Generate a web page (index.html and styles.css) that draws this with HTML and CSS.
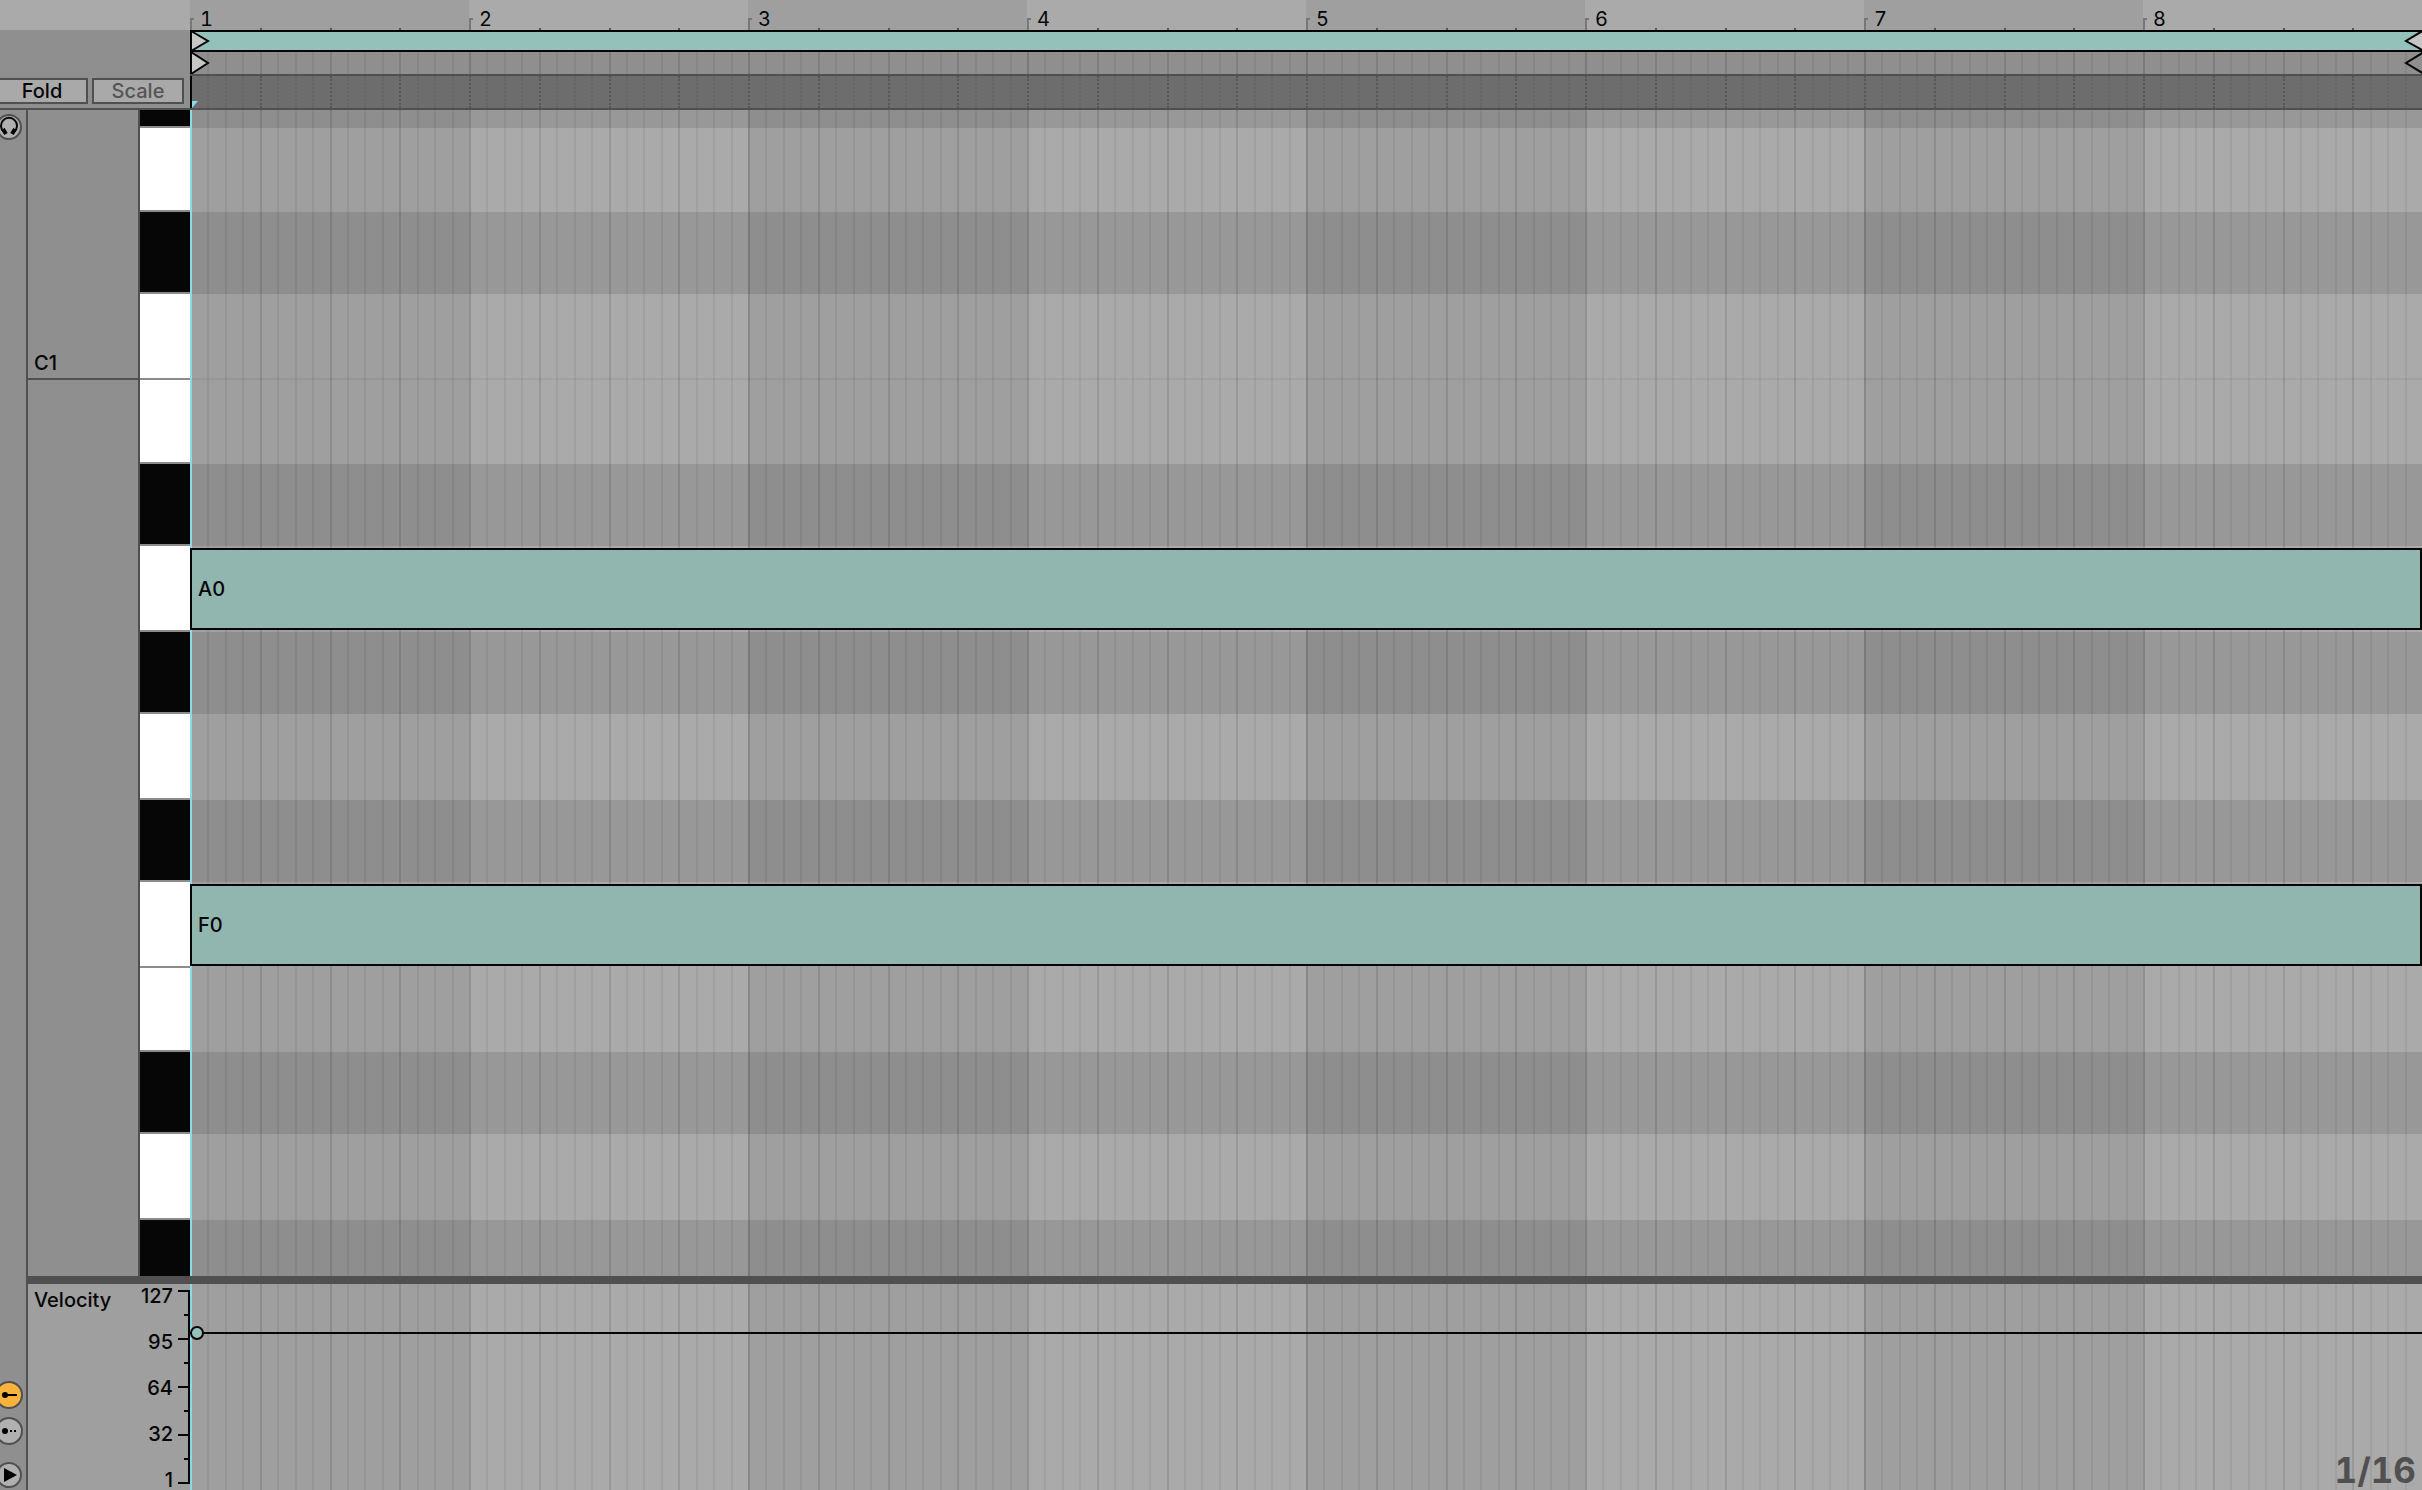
FILE: index.html
```
<!DOCTYPE html>
<html lang="en">

<head>
    <meta charset="UTF-8">
    <meta name="viewport" content="width=device-width, initial-scale=1.0">
    <title>MIDI Note Editor</title>
    <link rel="stylesheet" href="styles.css">
</head>

<body>
    <header class="header">
        <div class="header-left">
            <div class="header-blank"></div>
            <div class="modes">
                <button type="button" class="mode fold">Fold</button>
                <button type="button" class="mode scale">Scale</button>
            </div>
        </div>
        <div class="timeline">
            <div class="ruler bars" data-numbers="true"></div>
            <div class="loop">
                <svg class="marker" viewBox="0 0 20 22"><path d="M1 1 L18 11 L1 21 Z" /></svg>
                <svg class="marker" viewBox="0 0 20 22"><path d="M22 0 L4 11 L22 21" /></svg>
            </div>
            <div class="strip">
                <div class="bars plain"></div>
                <div class="markers">
                    <svg class="marker" viewBox="0 0 20 22"><path d="M1 0 L18 11 L1 22 Z" /></svg>
                    <svg class="marker end" viewBox="0 0 20 22"><path d="M22 0 L4 11 L22 22" /></svg>
                </div>
            </div>
            <div class="scrub">
                <div class="bars plain faint"></div>
                <svg class="playhead" viewBox="0 0 6 7"><path d="M0 0 H6 L0 7 Z" /></svg>
            </div>
        </div>
    </header>

    <main class="main">
        <aside class="rail">
            <button type="button" class="round" aria-label="Preview">
                <svg viewBox="0 0 28 28">
                    <circle class="ring" cx="14" cy="14" r="12" />
                    <path class="phones" d="M9 19 A8 8 0 1 1 19 19" />
                    <path class="cups" d="M8 16 L11 21 M20 16 L17 21" />
                </svg>
            </button>
            <button type="button" class="round push" aria-label="Show velocity">
                <svg viewBox="0 0 28 28">
                    <circle class="ring on" cx="14" cy="14" r="13" />
                    <circle cx="10" cy="14" r="3" />
                    <path d="M10 13 H22 V15 H10 Z" />
                </svg>
            </button>
            <button type="button" class="round chance" aria-label="Show chance">
                <svg viewBox="0 0 28 28">
                    <circle class="ring" cx="14" cy="14" r="13" />
                    <circle cx="10" cy="14" r="3" />
                    <path d="M15 13 H17 V15 H15 Z M19 13 H21 V15 H19 Z" />
                </svg>
            </button>
            <button type="button" class="round play" aria-label="Show lanes">
                <svg viewBox="0 0 28 28">
                    <circle class="ring" cx="14" cy="14" r="12" />
                    <path d="M9 7 L22 14 L9 21 Z" />
                </svg>
            </button>
        </aside>

        <div class="editor">
            <section class="roll">
                <div class="octaves">
                    <div class="octave">C1</div>
                </div>
                <div class="keys" id="keys"></div>
                <div class="stack">
                    <div class="bars"></div>
                    <div class="lanes" id="lanes"></div>
                </div>
            </section>

            <section class="velocity">
                <div class="velocity-title">Velocity</div>
                <div class="labels">
                    <span>127</span>
                    <span>95</span>
                    <span>64</span>
                    <span>32</span>
                    <span>1</span>
                </div>
                <div class="ticks">
                    <i></i><i></i><i></i><i></i><i></i><i></i><i></i><i></i><i></i>
                </div>
                <div class="stack">
                    <div class="bars"></div>
                    <div class="stem"></div>
                    <div class="grid-size">1/16</div>
                </div>
            </section>
        </div>
    </main>

    <script>
        // visible pitches from top to bottom, "note" marks the ones that are played
        const pitches = [
            { name: 'D#1', type: 'black' },
            { name: 'D1', type: 'white short' },
            { name: 'C#1', type: 'black' },
            { name: 'C1', type: 'white split' },
            { name: 'B0', type: 'white short' },
            { name: 'A#0', type: 'black' },
            { name: 'A0', type: 'white', note: true },
            { name: 'G#0', type: 'black' },
            { name: 'G0', type: 'white' },
            { name: 'F#0', type: 'black' },
            { name: 'F0', type: 'white', note: true },
            { name: 'E0', type: 'white short' },
            { name: 'D#0', type: 'black' },
            { name: 'D0', type: 'white' },
            { name: 'C#0', type: 'black' }
        ];

        const keys = document.getElementById('keys');
        const lanes = document.getElementById('lanes');

        pitches.forEach(function (pitch) {
            const key = document.createElement('div');
            key.className = 'key ' + pitch.type;
            keys.appendChild(key);

            const lane = document.createElement('div');
            lane.className = 'lane ' + pitch.type;
            if (pitch.note) {
                lane.innerHTML = `<div class="note">${pitch.name}</div>`;
            }
            lanes.appendChild(lane);
        });

        // 8 bars, each with 16 steps
        document.querySelectorAll('.bars').forEach(function (bars) {
            for (let i = 1; i <= 8; i++) {
                const bar = document.createElement('div');
                bar.className = 'bar';
                if (bars.dataset.numbers) {
                    bar.innerHTML = `<span class="number">${i}</span><b></b><b></b><b></b>`;
                } else {
                    bar.innerHTML = '<i></i>'.repeat(16);
                }
                bars.appendChild(bar);
            }
        });
    </script>
</body>

</html>
```
FILE: styles.css
```
*,
*::before {
    box-sizing: border-box;
}

body {
    display: flex;
    flex-direction: column;
    height: 100vh;
    margin: 0;
    overflow: hidden;
    background-color: #8f8f8f;
    color: #060606;
    font-family: Inter, "Liberation Sans", sans-serif;
    font-size: 20px;
    font-weight: 500;
    line-height: 20px;
}

svg {
    display: block;
}

button {
    padding: 0;
    font: inherit;
}

/* header */
.header {
    display: grid;
    grid-template-columns: 190px 1fr;
    height: 110px;
    border-bottom: 2px solid #505050;
}

.header-left {
    display: flex;
    flex-direction: column;
    justify-content: space-between;
}

.header-blank {
    height: 30px;
    background-color: #aaaaaa;
}

.modes {
    display: flex;
    gap: 4px;
    margin-left: -4px;
    padding-bottom: 4px;
}

.mode {
    width: 92px;
    height: 26px;
    border: 2px solid #505050;
    background-color: #a9a9a9;
    color: #060606;
    line-height: 22px;
}

.scale {
    color: #555555;
}

.timeline {
    display: flex;
    flex-direction: column;
    min-width: 0;
}

/* bars and steps */
.bars {
    display: grid;
    grid-template-columns: repeat(8, 1fr);
    min-width: 0;
}

.bar {
    display: grid;
    grid-template-columns: repeat(16, 1fr);
    background-color: #9f9f9f;
}

.bar:nth-child(even) {
    background-color: #aaaaaa;
}

.bar i {
    border-left: 2px solid rgba(0, 0, 0, 0.06);
}

.bar i:nth-child(4n+1) {
    border-color: rgba(0, 0, 0, 0.11);
}

.bar i:first-child {
    border-color: rgba(0, 0, 0, 0.15);
}

.plain .bar,
.plain .bar:nth-child(even) {
    background-color: transparent;
}

.faint .bar i {
    border-left-style: dotted;
    border-color: rgba(0, 0, 0, 0.06);
}

.faint .bar i:nth-child(4n+1) {
    border-color: rgba(0, 0, 0, 0.2);
}

.ruler {
    height: 30px;
}

.ruler .bar {
    grid-template-columns: repeat(4, 1fr);
    align-items: end;
}

.number {
    height: 12px;
    padding-left: 8px;
    border-left: 2px solid #777777;
    background: linear-gradient(#777777, #777777) no-repeat 0 0 / 2px 2px;
    font-weight: 400;
    font-variant-numeric: tabular-nums;
    line-height: 3px;
}

.ruler b {
    width: 2px;
    height: 2px;
    background-color: #555555;
}

.loop {
    display: flex;
    justify-content: space-between;
    height: 22px;
    border: solid #060606;
    border-width: 2px 0 2px 2px;
    background-color: #94c1ba;
}

.marker {
    flex: none;
    width: 20px;
    height: 22px;
    fill: #c6c6c6;
    stroke: #060606;
    stroke-width: 2;
}

.loop .marker {
    margin: -2px 0 0 -2px;
}

.strip,
.scrub,
.stack {
    display: grid;
    grid-template-columns: minmax(0, 1fr);
    grid-template-rows: minmax(0, 1fr);
}

.strip > *,
.scrub > *,
.stack > * {
    grid-area: 1 / 1;
}

.strip {
    height: 24px;
    border-bottom: 2px solid #505050;
}

.markers {
    display: flex;
    justify-content: space-between;
    border-left: 2px solid #060606;
}

.markers .marker {
    margin-left: -2px;
}

.marker.end {
    fill: none;
}

.scrub {
    height: 32px;
    background-color: #6d6d6d;
}

.playhead {
    align-self: end;
    box-sizing: content-box;
    width: 6px;
    height: 7px;
    padding-top: 25px;
    border-left: 2px solid #060606;
    fill: #8adbe8;
}

/* left rail */
.main {
    display: flex;
    flex: 1;
    min-height: 0;
}

.rail {
    display: flex;
    flex-direction: column;
    width: 28px;
    padding: 3px 0 1px;
    border-right: 2px solid #505050;
    overflow: hidden;
}

.round {
    width: 28px;
    height: 28px;
    margin-left: -5px;
    border: 0;
    background: none;
}

.ring {
    fill: #b0b0b0;
    stroke: #505050;
    stroke-width: 2;
}

.ring.on {
    fill: #f9b23c;
}

.phones,
.cups {
    fill: none;
    stroke: #060606;
    stroke-width: 2;
}

.cups {
    stroke-width: 4;
}

.push {
    margin-top: auto;
}

.chance {
    margin-top: 8px;
}

.play {
    margin-top: 16px;
}

/* piano roll */
.editor {
    display: flex;
    flex: 1;
    flex-direction: column;
    min-width: 0;
}

.roll {
    display: grid;
    flex: 1;
    grid-template-columns: 112px 50px minmax(0, 1fr);
    grid-template-rows: minmax(0, 1fr);
    min-height: 0;
    overflow: hidden;
    border-bottom: 8px solid #505050;
}

.octaves {
    border-right: 2px solid #505050;
}

.octave {
    display: flex;
    align-items: flex-end;
    height: 270px;
    padding: 0 6px;
    border-bottom: 2px solid #505050;
    line-height: 30px;
}

.keys {
    overflow: hidden;
}

.key,
.lane {
    height: 86px;
}

.key {
    border-bottom: 2px solid #8c8c8c;
    background-color: #ffffff;
}

.key.black {
    background-color: #060606;
}

.short {
    height: 84px;
}

.black {
    height: 82px;
}

.black:first-child {
    height: 18px;
}

.lanes {
    border-left: 2px solid #8adbe8;
}

.lane.black {
    background-color: rgba(0, 0, 0, 0.1);
}

.lane.split {
    border-bottom: 2px solid rgba(0, 0, 0, 0.05);
}

.lane:has(.note) {
    margin-left: -2px;
    padding: 2px 0;
}

.note {
    display: flex;
    align-items: center;
    height: 82px;
    padding-left: 6px;
    border: 2px solid #060606;
    background-color: #90b6af;
}

/* velocity lane */
.velocity {
    display: grid;
    grid-template-columns: 95px 50px 17px minmax(0, 1fr);
    height: 206px;
    background-color: #9f9f9f;
}

.velocity-title {
    padding: 6px 0 0 6px;
}

.labels {
    display: flex;
    flex-direction: column;
    justify-content: space-between;
    padding: 2px 0 0;
    text-align: right;
}

.ticks {
    display: flex;
    flex-direction: column;
    align-items: flex-end;
    justify-content: space-between;
    margin: 6px 0;
    border-right: 2px solid #060606;
}

.ticks i {
    width: 4px;
    height: 2px;
    background-color: #060606;
}

.ticks i:nth-child(odd) {
    width: 10px;
}

.velocity .bar:first-child i:first-child {
    border-color: #8adbe8;
}

.stem {
    position: relative;
    height: 2px;
    margin-top: 48px;
    background-color: #060606;
}

.stem::before {
    content: "";
    position: absolute;
    top: -6px;
    left: 0;
    width: 14px;
    height: 14px;
    border: 2px solid #060606;
    border-radius: 50%;
    background-color: #94c1ba;
}

.grid-size {
    align-self: end;
    justify-self: end;
    padding: 0 6px 0 0;
    color: #505050;
    font-size: 35px;
    font-weight: bold;
    font-variant-numeric: tabular-nums;
    line-height: 40px;
}
```
